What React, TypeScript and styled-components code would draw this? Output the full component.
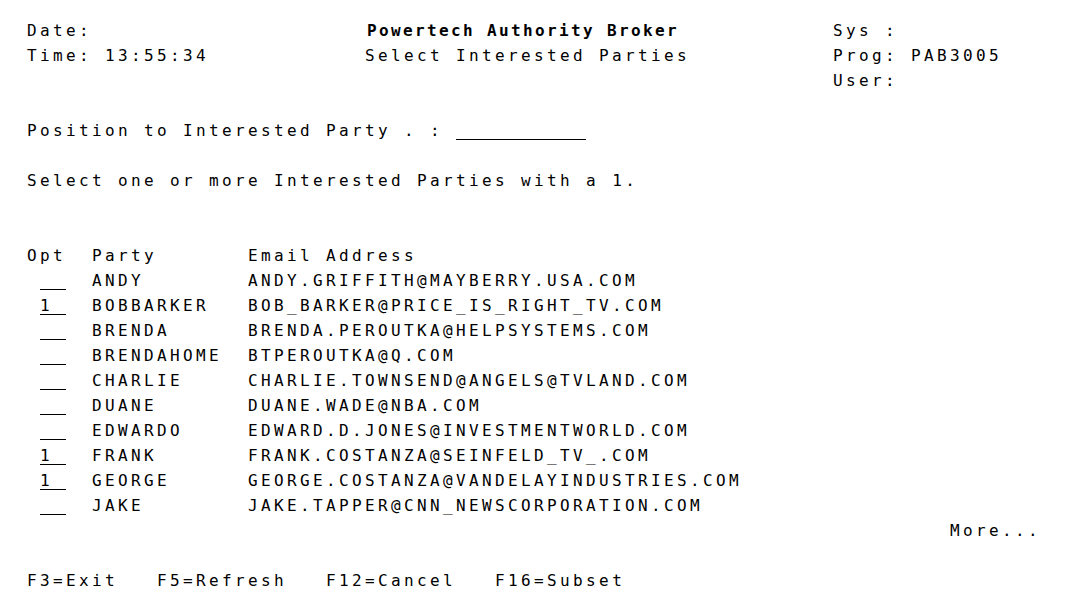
import React from "react";
import styled, { createGlobalStyle } from "styled-components";

const GlobalStyle = createGlobalStyle`
  html, body {
    margin: 0;
    padding: 0;
    background: #ffffff;
    overflow: hidden;
  }
`;

const CELL = 13;

const Screen = styled.div`
  display: grid;
  grid-template-columns: repeat(80, ${CELL}px);
  grid-auto-rows: 25px;
  padding: 18px 0 0 27px;
  font-family: "DejaVu Sans Mono", "Liberation Mono", monospace;
  font-size: 16px;
  line-height: 25px;
  color: #000000;
  background: #ffffff;
`;

type FieldProps = { $row: number; $col: number; $len: number };

const Text = styled.span<FieldProps>`
  grid-row: ${(p) => p.$row + 1};
  grid-column: ${(p) => p.$col + 1} / span ${(p) => p.$len};
  white-space: pre;
  letter-spacing: ${CELL - 9.63}px;
`;

const Title = styled(Text)`
  font-weight: bold;
  letter-spacing: ${12 - 9.63}px;
  padding-left: 2px;
`;

const Input = styled(Text)`
  background-image: linear-gradient(#000, #000);
  background-repeat: no-repeat;
  background-size: 100% 1px;
  background-position: 0 21px;
`;

type Party = { opt: string; name: string; email: string };

const parties: Party[] = [
  { opt: "", name: "ANDY", email: "ANDY.GRIFFITH@MAYBERRY.USA.COM" },
  { opt: "1", name: "BOBBARKER", email: "BOB_BARKER@PRICE_IS_RIGHT_TV.COM" },
  { opt: "", name: "BRENDA", email: "BRENDA.PEROUTKA@HELPSYSTEMS.COM" },
  { opt: "", name: "BRENDAHOME", email: "BTPEROUTKA@Q.COM" },
  { opt: "", name: "CHARLIE", email: "CHARLIE.TOWNSEND@ANGELS@TVLAND.COM" },
  { opt: "", name: "DUANE", email: "DUANE.WADE@NBA.COM" },
  { opt: "", name: "EDWARDO", email: "EDWARD.D.JONES@INVESTMENTWORLD.COM" },
  { opt: "1", name: "FRANK", email: "FRANK.COSTANZA@SEINFELD_TV_.COM" },
  { opt: "1", name: "GEORGE", email: "GEORGE.COSTANZA@VANDELAYINDUSTRIES.COM" },
  { opt: "", name: "JAKE", email: "JAKE.TAPPER@CNN_NEWSCORPORATION.COM" },
];

const T = ({ row, col, children }: { row: number; col: number; children: string }) => (
  <Text $row={row} $col={col} $len={Math.max(children.length, 1)}>
    {children}
  </Text>
);

export default function App() {
  return (
    <>
      <GlobalStyle />
      <Screen>
        <T row={0} col={0}>Date:</T>
        <Title $row={0} $col={26} $len={24}>Powertech Authority Broker</Title>
        <T row={0} col={62}>Sys :</T>

        <T row={1} col={0}>Time: 13:55:34</T>
        <T row={1} col={26}>Select Interested Parties</T>
        <T row={1} col={62}>Prog: PAB3005</T>

        <T row={2} col={62}>User:</T>

        <T row={4} col={0}>Position to Interested Party . :</T>
        <Input $row={4} $col={33} $len={10}>{" ".repeat(10)}</Input>

        <T row={6} col={0}>Select one or more Interested Parties with a 1.</T>

        <T row={9} col={0}>Opt</T>
        <T row={9} col={5}>Party</T>
        <T row={9} col={17}>Email Address</T>

        {parties.map((p, i) => (
          <React.Fragment key={p.name}>
            <Input $row={10 + i} $col={1} $len={2}>
              {(p.opt + "  ").slice(0, 2)}
            </Input>
            <T row={10 + i} col={5}>{p.name}</T>
            <T row={10 + i} col={17}>{p.email}</T>
          </React.Fragment>
        ))}

        <T row={20} col={71}>More...</T>

        <T row={22} col={0}>F3=Exit   F5=Refresh   F12=Cancel   F16=Subset</T>
      </Screen>
    </>
  );
}
